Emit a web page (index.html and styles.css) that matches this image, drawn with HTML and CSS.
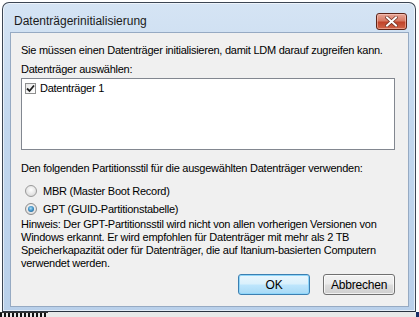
FILE: index.html
```html
<!DOCTYPE html>
<html lang="de">
<head>
    <meta charset="UTF-8">
    <title>Datenträgerinitialisierung</title>
    <link rel="stylesheet" href="styles.css">
</head>
<body>
    <div class="desktop">
        <div class="window">
            <div class="titlebar">
                <span class="title">Datenträgerinitialisierung</span>
                <button class="close" title="Schließen">
                    <svg width="13" height="11" viewBox="0 0 13 11">
                        <path d="M2 1.5 L11 9.5 M11 1.5 L2 9.5" stroke="#6b2b1e" stroke-width="3.4" stroke-linecap="square"/>
                        <path d="M2 1.5 L11 9.5 M11 1.5 L2 9.5" stroke="#ffffff" stroke-width="2" stroke-linecap="square"/>
                    </svg>
                </button>
            </div>
            <div class="client">
                <p class="intro">Sie müssen einen Datenträger initialisieren, damit LDM darauf zugreifen kann.</p>
                <p class="label">Datenträger auswählen:</p>
                <div class="listbox">
                    <label class="item">
                        <span class="check">
                            <svg width="9" height="9" viewBox="0 0 9 9">
                                <path d="M1 4.5 L3.5 7 L8 1.5" fill="none" stroke="#1e1e1e" stroke-width="1.8"/>
                            </svg>
                        </span>
                        Datenträger 1
                    </label>
                </div>
                <p class="label style-label">Den folgenden Partitionsstil für die ausgewählten Datenträger verwenden:</p>
                <div class="radios">
                    <label class="radio-row">
                        <span class="radio"></span>
                        MBR (Master Boot Record)
                    </label>
                    <label class="radio-row">
                        <span class="radio selected"><span class="dot"></span></span>
                        GPT (GUID-Partitionstabelle)
                    </label>
                </div>
                <p class="hint">Hinweis: Der GPT-Partitionsstil wird nicht von allen vorherigen Versionen von<br>Windows erkannt. Er wird empfohlen für Datenträger mit mehr als 2 TB<br>Speicherkapazität oder für Datenträger, die auf Itanium-basierten Computern<br>verwendet werden.</p>
                <div class="buttons">
                    <button class="btn default">OK</button>
                    <button class="btn">Abbrechen</button>
                </div>
            </div>
        </div>
        <div class="under">
            <span class="under-left"></span>
            <span class="under-right"></span>
        </div>
    </div>
</body>
</html>
```

FILE: styles.css
```css
body {
    margin: 0;
    padding: 0;
    background: #ffffff;
    font-family: "Liberation Sans", Arial, sans-serif;
    font-size: 11px;
    letter-spacing: -0.25px;
    color: #000;
}
.desktop {
    width: 419px;
    height: 317px;
    overflow: hidden;
    padding-top: 2px;
    box-sizing: border-box;
}
.window {
    margin-left: 2px;
    width: 414px;
    height: 310px;
    box-sizing: border-box;
    border: 1px solid #3c4654;
    border-bottom-color: #2a3340;
    border-radius: 7px 7px 0 0;
    background: linear-gradient(180deg, #d5e4f4 0%, #c2d7ee 40%, #b9d0ea 100%);
    padding: 0 6px 5px 7px;
    box-shadow: inset 0 0 0 1px rgba(255, 255, 255, 0.6);
}
.titlebar {
    height: 29px;
    display: flex;
    align-items: center;
    justify-content: space-between;
}
.title {
    font-size: 12px;
    letter-spacing: 0;
    color: #1a1a1a;
    padding-left: 4px;
    padding-top: 7px;
}
.close {
    width: 31px;
    height: 17px;
    margin-top: 8px;
    margin-right: 2px;
    border: 1px solid #5e2418;
    border-radius: 3px;
    background: linear-gradient(180deg, #e7a697 0%, #d77a64 45%, #c0432a 55%, #d0664a 100%);
    box-shadow: inset 0 0 0 1px rgba(255, 210, 200, 0.5);
    padding: 0;
    display: flex;
    align-items: center;
    justify-content: center;
}
.client {
    height: 275px;
    box-sizing: border-box;
    background: #f0f0f0;
    border: 1px solid #96aac3;
    padding: 10px 13px 0 10px;
}
p {
    margin: 0;
    line-height: 14px;
    white-space: nowrap;
}
.label {
    margin-top: 5px;
}
.listbox {
    margin-top: 2px;
    height: 72px;
    box-sizing: border-box;
    background: #ffffff;
    border: 1px solid #828790;
    padding: 2px 3px;
}
.item {
    display: flex;
    align-items: center;
    gap: 4px;
    height: 14px;
}
.check {
    width: 11px;
    height: 11px;
    box-sizing: border-box;
    border: 1px solid #8e8f8f;
    background: linear-gradient(135deg, #e8e8e8, #ffffff);
    display: flex;
    align-items: center;
    justify-content: center;
}
.style-label {
    margin-top: 11px;
}
.radios {
    margin-top: 7px;
}
.radio-row {
    display: flex;
    align-items: center;
    gap: 6px;
    height: 18px;
    padding-left: 4px;
}
.radio {
    width: 12px;
    height: 12px;
    box-sizing: border-box;
    border-radius: 50%;
    border: 1px solid #9a9a9a;
    background: radial-gradient(circle at 50% 40%, #ffffff 0%, #e4e4e4 60%, #cfcfcf 100%);
    display: flex;
    align-items: center;
    justify-content: center;
}
.radio.selected {
    border-color: #8c8c8c;
}
.dot {
    width: 6px;
    height: 6px;
    border-radius: 50%;
    background: radial-gradient(circle at 45% 40%, #a9dcf6 0%, #3d8fc4 50%, #174b7a 100%);
}
.hint {
    line-height: 13px;
}
.buttons {
    display: flex;
    justify-content: flex-end;
    gap: 13px;
    margin-top: 4px;
}
.btn {
    width: 72px;
    height: 21px;
    font-family: "Liberation Sans", Arial, sans-serif;
    font-size: 12px;
    letter-spacing: -0.2px;
    color: #000;
    border: 1px solid #707070;
    border-radius: 3px;
    background: linear-gradient(180deg, #f2f2f2 0%, #ebebeb 48%, #dddddd 52%, #cfcfcf 100%);
    box-shadow: inset 0 0 0 1px rgba(255, 255, 255, 0.7);
    padding: 0;
}
.btn.default {
    border-color: #3c7fb1;
    background: linear-gradient(180deg, #eaf6fd 0%, #d9f0fc 48%, #bee6fd 52%, #a7d9f5 100%);
    box-shadow: inset 0 0 0 1px #8fd6fa;
}
.under {
    display: flex;
    justify-content: space-between;
    height: 5px;
    background: #e9e9e9;
}
.under-left {
    width: 48px;
    border-top: 1px solid #333;
    background: repeating-linear-gradient(90deg, #111 0 2px, #e9e9e9 2px 4px);
}
.under-right {
    width: 3px;
    background: #1b2f66;
}
```
